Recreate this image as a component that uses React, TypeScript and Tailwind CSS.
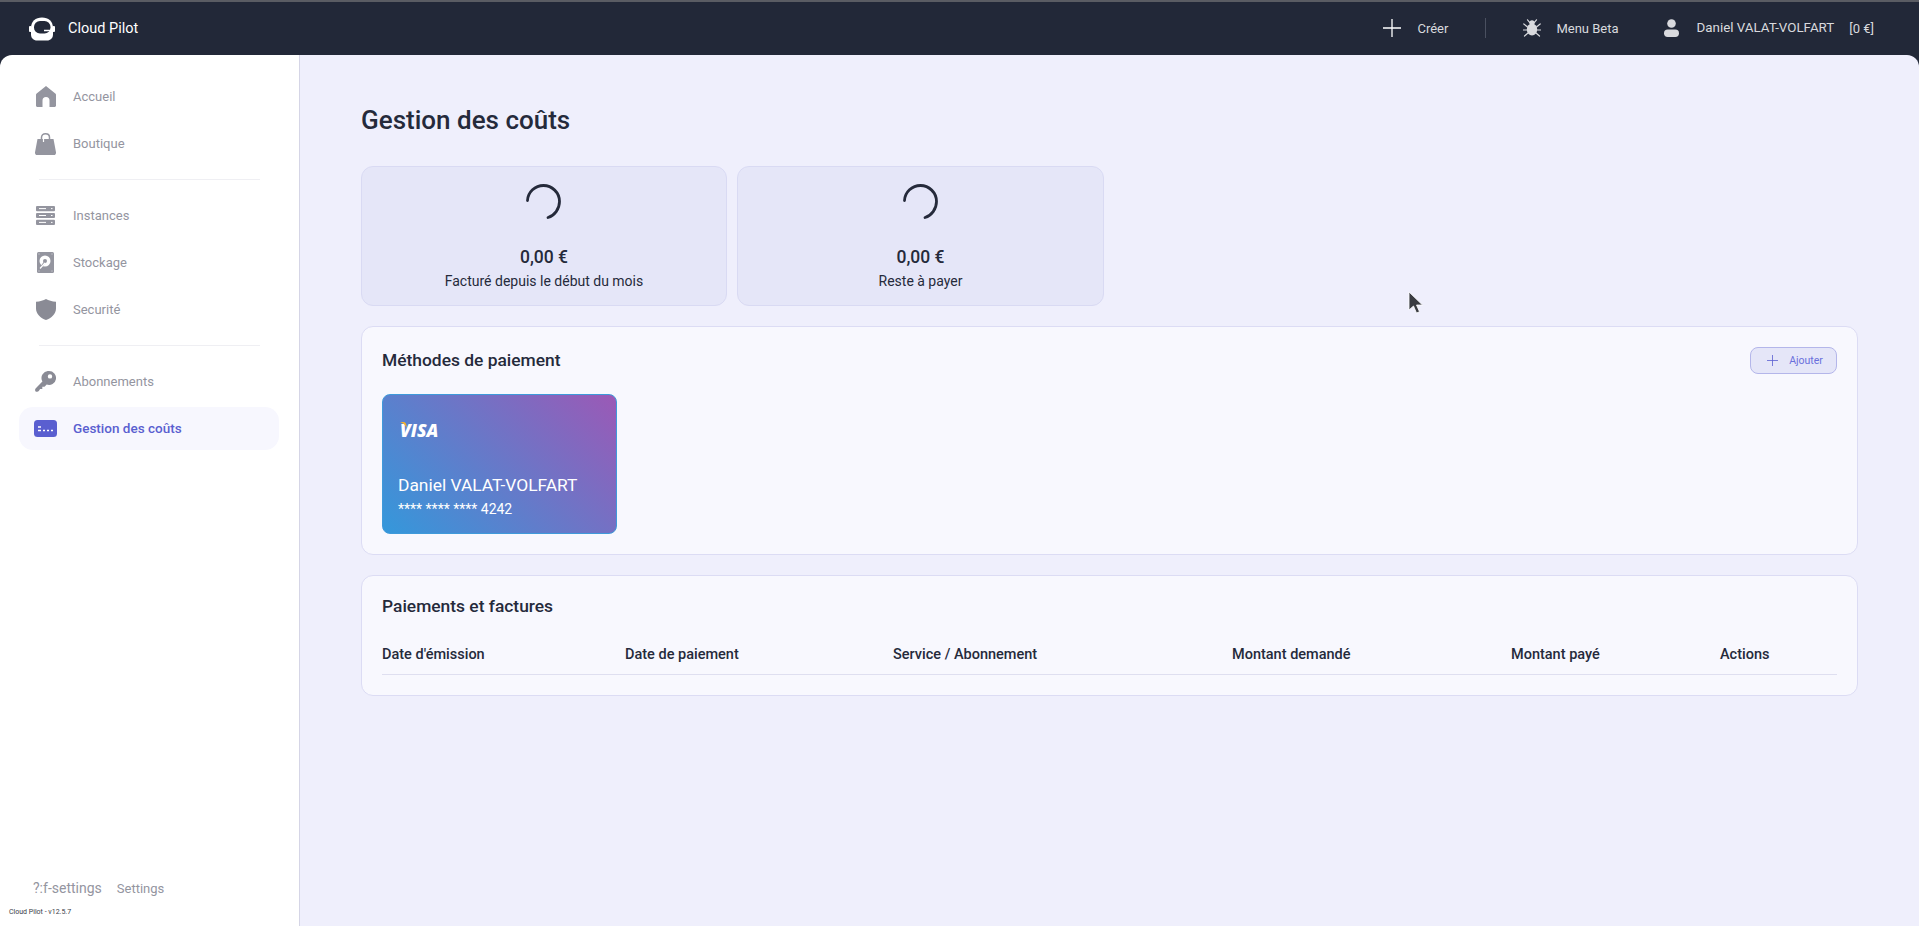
import type { ReactNode } from "react"

const columns = [
  { label: "Date d'émission", width: "w-[243px]" },
  { label: "Date de paiement", width: "w-[268px]" },
  { label: "Service / Abonnement", width: "w-[339px]" },
  { label: "Montant demandé", width: "w-[279px]" },
  { label: "Montant payé", width: "w-[209px]" },
  { label: "Actions", width: "w-[117px]" },
]

function Logo() {
  return (
    <svg width="26" height="24" viewBox="0 0 26 24" fill="none">
      <path d="M13 .5C19.500.5 24 4.500 24 11v6.500c0 3.500-2.500 6-6 6H8c-3.500 0-6-2.500-6-6V11C2 4.500 6.500.5 13 .5Z" fill="#fff" />
      <rect x="5" y="4" width="16.500" height="12.500" rx="6" fill="#222838" />
      <path d="M15 13.500h6.500" stroke="#fff" strokeWidth="1.500" />
      <rect x="0" y="9" width="2.500" height="6" rx="1" fill="#fff" />
      <rect x="23.500" y="9" width="2.500" height="6" rx="1" fill="#fff" />
    </svg>
  )
}

function PlusIcon({ size, color }: { size: number; color: string }) {
  return (
    <svg width={size} height={size} viewBox="0 0 18 18" stroke={color} strokeWidth="1.300">
      <path d="M9 0v18M0 9h18" />
    </svg>
  )
}

function BugIcon() {
  return (
    <svg width="18" height="18" viewBox="0 0 18 18" fill="#d9dade" stroke="#d9dade" strokeWidth="1.200" strokeLinecap="round">
      <ellipse cx="9" cy="10.500" rx="5.200" ry="6" stroke="none" />
      <circle cx="9" cy="3.800" r="2.600" stroke="none" />
      <path d="M4.500 .8l2.500 3M13.500 .8L11 3.800M.8 5l3.700 3M17.200 5l-3.700 3M.5 11h4M17.500 11h-4M1.500 17l3.500-3M16.500 17L13 14" fill="none" />
    </svg>
  )
}

function UserIcon() {
  return (
    <svg width="15" height="18" viewBox="0 0 15 18" fill="#d9dade">
      <circle cx="7.500" cy="4.500" r="4.300" />
      <rect x="0" y="10.500" width="15" height="7.500" rx="3.700" />
    </svg>
  )
}

function HomeIcon() {
  return (
    <svg width="20" height="21" viewBox="0 0 20 21" fill="#94959f">
      <path d="M10 0 19.300 7.500c.4.300.7.800.7 1.300V19.500c0 .8-.7 1.500-1.500 1.500H13.500V14.500a3.500 3.500 0 0 0-7 0V21H1.500C.7 21 0 20.300 0 19.500V8.800c0-.5.300-1 .7-1.300Z" />
    </svg>
  )
}

function BagIcon() {
  return (
    <svg width="21" height="22" viewBox="0 0 21 22" fill="none">
      <path d="M2.500 6H18.500L21 19.500c.1 1.300-.8 2.500-2 2.500H2c-1.200 0-2.100-1.200-2-2.500Z" fill="#94959f" />
      <path d="M6.500 10V4.500C6.500 2.200 8 .8 10.500.8s4 1.400 4 3.700V10" stroke="#94959f" strokeWidth="1.500" />
      <path d="M8.500 9V5c0-1.300.8-2 2-2" stroke="#fff" strokeWidth="1.200" />
    </svg>
  )
}

function ServerIcon() {
  return (
    <svg width="19" height="19" viewBox="0 0 19 19">
      <rect width="19" height="5.200" rx="1" fill="#94959f" />
      <rect y="6.900" width="19" height="5.200" rx="1" fill="#94959f" />
      <rect y="13.800" width="19" height="5.200" rx="1" fill="#94959f" />
      <path d="M3 2.600h7M3 9.500h7M3 16.400h7" stroke="#fff" strokeWidth="1" />
      <path d="M15 2.600h1.500M15 9.500h1.500M15 16.400h1.500" stroke="#fff" strokeWidth="1" />
    </svg>
  )
}

function DiskIcon() {
  return (
    <svg width="17" height="21" viewBox="0 0 17 21">
      <rect width="17" height="21" rx="1.500" fill="#94959f" />
      <circle cx="8" cy="9" r="5.500" fill="#fff" />
      <circle cx="8" cy="9" r="2" fill="#94959f" />
      <path d="M3 16.500 7.500 10.500" stroke="#94959f" strokeWidth="2" />
      <path d="M3 16.500 8 11" stroke="#fff" strokeWidth="1.200" />
      <circle cx="2" cy="2" r=".7" fill="#c4c5cc" />
      <circle cx="15" cy="2" r=".7" fill="#c4c5cc" />
      <circle cx="2" cy="19" r=".7" fill="#c4c5cc" />
      <circle cx="15" cy="19" r=".7" fill="#c4c5cc" />
    </svg>
  )
}

function ShieldIcon() {
  return (
    <svg width="20" height="21" viewBox="0 0 20 21" fill="#8a8b95">
      <path d="M10 0C12.500 1.500 16 2.500 20 2.800V9.500C20 15 15.500 19 10 21 4.500 19 0 15 0 9.500V2.800C4 2.500 7.500 1.500 10 0Z" />
    </svg>
  )
}

function KeyIcon() {
  return (
    <svg width="21" height="21" viewBox="0 0 21 21" fill="#8a8b95">
      <path d="M14 0a7 7 0 1 1-2.300 13.600L9.500 15.800H7.300V18H5.100L4 19.800c-.6.800-1.500 1.200-2.400 1C.6 20.600 0 19.700.1 18.700c0-.6.300-1.100.7-1.500L7.400 10.400A7 7 0 0 1 14 0Zm1 3.200a2.200 2.200 0 1 0 0 4.400 2.200 2.200 0 0 0 0-4.400Z" fillRule="evenodd" />
    </svg>
  )
}

function CardIcon() {
  return (
    <svg width="23" height="17" viewBox="0 0 23 17">
      <rect width="23" height="17" rx="3.500" fill="#5a5fd0" />
      <path d="M4 7h3M4 10.500h3M9 10.500h2M13 10.500h2M17 10.500h2" stroke="#fff" strokeWidth="1.300" />
    </svg>
  )
}

function Spinner() {
  return (
    <svg width="36" height="36" viewBox="0 0 36 36" fill="none">
      <path d="M1.500 16.500C2 8 9 1.500 17.500 1.500 26 1.500 33.500 8.500 33.500 17.500c0 7.500-5 14-11.500 16" stroke="#252a3b" strokeWidth="2.800" strokeLinecap="round" />
    </svg>
  )
}

function NavItem({ icon, label, active }: { icon: ReactNode; label: string; active?: boolean }) {
  return (
    <div className={`mr-[20px] ml-[19px] flex h-[43px] items-center rounded-[14px] ${active ? "bg-[#f7f7fe] text-[#5a5fd0] font-medium" : "text-[#94959f]"}`}>
      <div className="ml-[14px] flex w-[25px] justify-center">{icon}</div>
      <span className={`ml-[15px] ${active ? "text-[13.500px]" : "text-[13px]"}`}>{label}</span>
    </div>
  )
}

function NavDivider() {
  return <div className="mx-[39px] my-[14px] h-px bg-[#efeff3]" />
}

function StatCard({ amount, label, width }: { amount: string; label: string; width: string }) {
  return (
    <div className={`flex h-[140px] ${width} flex-col items-center rounded-xl border border-[#d9daf3] bg-[#e5e6f8] pt-[17px]`}>
      <Spinner />
      <div className="mt-[27px] text-[17.500px] leading-5 font-medium text-[#252a3b]">{amount}</div>
      <div className="mt-[4px] text-[14px] leading-5 text-[#252a3b]">{label}</div>
    </div>
  )
}

export default function App() {
  return (
    <div className="relative flex h-screen flex-col overflow-hidden bg-[#222838] font-['Roboto',sans-serif]">
      <div className="h-[2px] bg-[#5a5c63]" />
      <header className="flex h-[53px] items-center pl-[29px] pr-[45px] text-[13px] text-[#d9dade]">
        <Logo />
        <span className="ml-[13px] text-[14.500px] text-white">Cloud Pilot</span>
        <div className="ml-auto flex items-center">
          <PlusIcon size={18} color="#ffffff" />
          <span className="ml-[16px]">Créer</span>
          <div className="mx-[37px] h-[20px] w-px bg-[#4a5060]" />
          <BugIcon />
          <span className="ml-[15px]">Menu Beta</span>
          <div className="ml-[45px]">
            <UserIcon />
          </div>
          <span className="ml-[18px] text-[13.350px]">Daniel VALAT-VOLFART</span>
          <span className="ml-[15px]">[0 €]</span>
        </div>
      </header>

      <div className="flex min-h-0 flex-1 overflow-hidden rounded-t-xl">
        <aside className="flex w-[300px] shrink-0 flex-col border-r border-[#d5d5e6] bg-white pt-[20px]">
          <nav className="flex flex-col gap-[4px]">
            <NavItem icon={<HomeIcon />} label="Accueil" />
            <NavItem icon={<BagIcon />} label="Boutique" />
          </nav>
          <NavDivider />
          <nav className="flex flex-col gap-[4px]">
            <NavItem icon={<ServerIcon />} label="Instances" />
            <NavItem icon={<DiskIcon />} label="Stockage" />
            <NavItem icon={<ShieldIcon />} label="Securité" />
          </nav>
          <NavDivider />
          <nav className="flex flex-col gap-[4px]">
            <NavItem icon={<KeyIcon />} label="Abonnements" />
            <NavItem icon={<CardIcon />} label="Gestion des coûts" active />
          </nav>
          <div className="mt-auto">
            <div className="flex items-baseline pl-[33px] text-[#94959f]">
              <span className="text-[14px]">?:f-settings</span>
              <span className="ml-[15px] text-[13px]">Settings</span>
            </div>
            <div className="mt-[8px] mb-[9px] pl-[9px] text-[7px] leading-[10px] text-[#3a3d48]">Cloud Pilot - v12.5.7</div>
          </div>
        </aside>

        <main className="min-w-0 flex-1 bg-[#efeffc] pt-[50px] pl-[61px] pr-[61px]">
          <h1 className="text-[26px] leading-[30px] font-medium text-[#252a3b]">Gestion des coûts</h1>

          <div className="mt-[31px] flex gap-[10px]">
            <StatCard amount="0,00 €" label="Facturé depuis le début du mois" width="w-[366px]" />
            <StatCard amount="0,00 €" label="Reste à payer" width="w-[367px]" />
          </div>

          <section className="mt-[20px] rounded-xl border border-[#dcdcf4] bg-[#f8f8fe] p-[20px]">
            <div className="flex h-[27px] items-center justify-between">
              <h2 className="text-[17.400px] font-medium text-[#252a3b]">Méthodes de paiement</h2>
              <button className="flex h-[27px] w-[87px] items-center justify-center gap-[11px] rounded-lg border border-[#b4b6ea] bg-[#e5e6f8] pl-[3px] text-[10.500px] leading-[27px] text-[#6a6fdc]">
                <PlusIcon size={11} color="#5a5fd0" />
                Ajouter
              </button>
            </div>
            <div className="mt-[20px] flex h-[140px] w-[235px] flex-col rounded-lg border border-[#3f9ada] bg-[linear-gradient(45deg,#3498db,#9b59b6)] pl-[15px] text-white">
              <div className="relative mt-[25px] ml-[2px] h-[20px] w-fit font-['Open_Sans',sans-serif] text-[17.500px] leading-[20px] font-extrabold italic">
                VISA
                <svg className="absolute top-[2px] left-0" width="7" height="6" viewBox="0 0 7 6">
                  <path d="M0 0h4c1.500.3 2.500 2 3 6C5.500 3 3 1 0 0Z" fill="#f4b32c" />
                </svg>
              </div>
              <div className="mt-[34px] text-[17.400px] leading-[22px]">Daniel VALAT-VOLFART</div>
              <div className="mt-[4px] text-[14px] leading-[18px]">**** **** **** 4242</div>
            </div>
          </section>

          <section className="mt-[20px] rounded-xl border border-[#dcdcf4] bg-[#f8f8fe] px-[20px] pt-[20px] pb-[20px]">
            <h2 className="text-[17.400px] leading-5 font-medium text-[#252a3b]">Paiements et factures</h2>
            <table className="mt-[20px] w-full table-fixed border-b border-[#dfdff0]">
              <thead>
                <tr>
                  {columns.map((c) => (
                    <th key={c.label} className={`${c.width} h-[38px] text-left text-[14.500px] font-medium text-[#252a3b]`}>
                      {c.label}
                    </th>
                  ))}
                </tr>
              </thead>
            </table>
          </section>
        </main>
      </div>

      <svg className="absolute top-[291px] left-[1408px]" width="15" height="23" viewBox="0 0 15 23">
        <path d="M1 1v18l4.500-4 3 7 3-1.300-3-6.700h6Z" fill="#3a3c42" stroke="#fff" strokeWidth=".8" />
      </svg>
    </div>
  )
}
